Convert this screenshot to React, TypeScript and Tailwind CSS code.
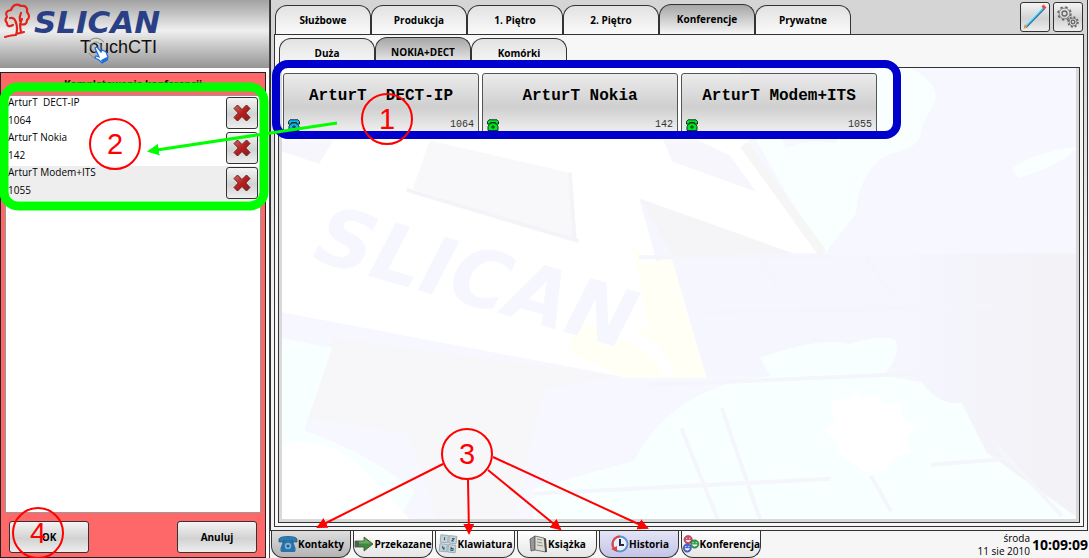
import React from "react";

type Phone = "blue" | "green";

const contacts: { name: string; number: string; phone: Phone }[] = [
  { name: "ArturT  DECT-IP", number: "1064", phone: "blue" },
  { name: "ArturT Nokia", number: "142", phone: "green" },
  { name: "ArturT Modem+ITS", number: "1055", phone: "green" },
];

const groups = ["Służbowe", "Produkcja", "1. Piętro", "2. Piętro", "Konferencje", "Prywatne"];
const subgroups = ["Duża", "NOKIA+DECT", "Komórki"];

const metal = "bg-linear-to-b from-[#f4f4f4] via-[#d2d2d2] via-55% to-[#eeeeee]";

// Icons
const DeskPhone: React.FC<{ phone: Phone }> = ({ phone }) => (
  <svg className="h-3 w-3" viewBox="0 0 12 12" fill={phone === "blue" ? "#12b4ee" : "#00e619"} stroke="#12332a" strokeWidth="1">
    <path d="M3 4h6l2 3.500v4H1v-4z" />
    <path d="M.5 2.500 2 .8h8l1.500 1.700V5H8.500V3.500h-5V5H.5z" />
    <path d="M6 6v4M4 8h4" />
  </svg>
);

const RemoveIcon = () => (
  <svg className="h-5 w-5" viewBox="0 0 20 20">
    <defs>
      <linearGradient id="cross" x1="0" y1="0" x2="1" y2="1">
        <stop offset="0" stopColor="#cf6a66" />
        <stop offset="0.5" stopColor="#b81c1c" />
        <stop offset="1" stopColor="#8f1a1a" />
      </linearGradient>
    </defs>
    <path d="M2 5.500 5.500 2 10 6.500 14.500 2 18 5.500 13.700 10 18 14.500 14.500 18 10 13.500 5.500 18 2 14.500 6.300 10z" fill="url(#cross)" stroke="#5d2222" strokeWidth="1" strokeLinejoin="round" />
  </svg>
);

const PencilIcon = () => (
  <svg className="h-7 w-7" viewBox="0 0 28 28">
    <path d="M4.500 24 23 5" stroke="#2c6f99" strokeWidth="3" />
    <path d="M4.500 23 22.500 4.500" stroke="#58c8ee" strokeWidth="2" />
    <path d="M4.500 22 21.500 4.500" stroke="#d5f5ff" strokeWidth="1" />
    <path d="m22 5 2-2" stroke="#e04b41" strokeWidth="4" />
    <path d="m2.500 26 1.300-4.500 2.700 2.500z" fill="#d99b3d" />
  </svg>
);

const GearsIcon = () => (
  <svg className="h-6 w-6" viewBox="0 0 24 24" fill="none" stroke="#666">
    <circle cx="8.500" cy="8.500" r="6.500" strokeWidth="1.500" strokeDasharray="2.500 2.600" />
    <circle cx="8.500" cy="8.500" r="5.400" strokeWidth="0.800" />
    <circle cx="8.500" cy="8.500" r="2.500" strokeWidth="1.300" />
    <circle cx="17" cy="17" r="5" strokeWidth="1.500" strokeDasharray="2 1.900" />
    <circle cx="17" cy="17" r="4" strokeWidth="0.800" />
    <circle cx="17" cy="17" r="1.800" strokeWidth="1.300" />
  </svg>
);

const BluePhoneIcon = () => (
  <svg className="h-5 w-5" viewBox="0 0 20 20">
    <path d="M5 7h10l2.500 7v3q0 1-2 1h-11q-2 0-2-1v-3z" fill="#2a72ab" />
    <path d="M1 8V5q1-2.500 9-2.500T19 5v3h-5V6.500H6V8z" fill="#2c7db6" stroke="#184f7b" strokeWidth="0.700" />
    <circle cx="10" cy="12" r="3.200" fill="#7fb4d6" />
    <circle cx="10" cy="12" r="1.500" fill="#1c5d8f" />
  </svg>
);

const ForwardIcon = () => (
  <svg className="h-5 w-5" viewBox="0 0 20 20">
    <path d="M1 7h9V3l9 7-9 7v-4H1z" fill="#3d8b3b" stroke="#3c4f3c" strokeWidth="0.800" />
    <path d="M1.500 7.500H5v5H1.500z" fill="#4f5f52" />
    <path d="M5 7.500h5.500V4.500L17 9.500H5z" fill="#6aa962" />
  </svg>
);

const KeypadIcon = () => (
  <svg className="h-5 w-5" viewBox="0 0 20 20" fill="#c3d3da" stroke="#8fa3ac" strokeWidth="0.800">
    <g transform="rotate(6 10 10)">
      <rect x="2" y="1.500" width="7.500" height="7.500" />
      <rect x="10.500" y="1.500" width="7.500" height="7.500" />
      <rect x="2" y="10.500" width="7.500" height="7.500" />
      <rect x="10.500" y="10.500" width="7.500" height="7.500" />
      <path d="M6 3.500v3M13.500 4h2l-2 2.500h2M5 12.500v2h2m-.5-1v3M13.500 12.500v3.500h2v-2h-2" stroke="#365563" strokeWidth="1" fill="none" />
    </g>
  </svg>
);

const BookIcon = () => (
  <svg className="h-5 w-5" viewBox="0 0 20 20">
    <path d="m2 5 5-3v14l-4 1z" fill="#999" stroke="#555" strokeWidth="0.800" />
    <path d="m7 2 9 2 2 14-11-2z" fill="#deded6" stroke="#5b5b56" strokeWidth="0.800" />
    <path d="m9 5 5 1M9 8l5 1M9 11l6 1" stroke="#929289" />
    <path d="m16 4 2 .5L19 18h-2z" fill="#4a4a48" />
  </svg>
);

const ClockIcon = () => (
  <svg className="h-5 w-5" viewBox="0 0 20 20" fill="none" strokeWidth="2">
    <circle cx="11" cy="10" r="7.500" fill="#e9effb" stroke="#5e94d6" />
    <path d="M11 2.500a7.500 7.500 0 0 0-5 13" stroke="#e04545" />
    <path d="m2 15 6 3V12z" fill="#e04545" />
    <path d="M11 5v6h4" stroke="#252b3c" />
  </svg>
);

const Face: React.FC<{ x: number; y: number; fill: string }> = ({ x, y, fill }) => (
  <g transform={`translate(${x} ${y})`}>
    <circle r="4.800" fill={fill} stroke="#3a3a55" strokeWidth="0.500" />
    <path d="M-2.500-1.500h1.500M1-1.500h1.500M-2.500 1q2.500 3 5 0z" stroke="#fff" fill="#fff" strokeWidth="0.900" />
  </g>
);

const FacesIcon = () => (
  <svg className="h-5 w-5" viewBox="0 0 20 20">
    <Face x={7} y={5} fill="#d84464" />
    <Face x={14.5} y={10} fill="#2ca443" />
    <Face x={6} y={14.5} fill="#4a67df" />
  </svg>
);

const views = [
  { label: "Kontakty", icon: <BluePhoneIcon />, look: "bg-linear-to-b from-[#dedede] to-[#b4b4b4]" },
  { label: "Przekazane", icon: <ForwardIcon />, look: "bg-linear-to-b from-white to-[#e6e6e6]" },
  { label: "Klawiatura", icon: <KeypadIcon />, look: "bg-linear-to-b from-white to-[#e6e6e6]" },
  { label: "Książka", icon: <BookIcon />, look: "bg-linear-to-b from-white to-[#e6e6e6]" },
  { label: "Historia", icon: <ClockIcon />, look: "bg-linear-to-b from-[#e4e4f4] to-[#c4c4e8]" },
  { label: "Konferencja", icon: <FacesIcon />, look: "bg-linear-to-b from-white to-[#e6e6e6]" },
];

const Logo = () => (
  <svg className="h-[68px] w-[269px]" viewBox="0 0 269 68" role="img" aria-label="Slican TouchCTI">
    <path
      d="M5 37q7-2 11-2 2-6 0-13M16 34l8-2M21 32q-2-8 1-13M13 25q-6 3-6-2-3-3 0-6-3-6 4-7 3-8 10-4 7-1 6 6 4 5 0 8 0 6-7 4M10 18q5-1 6 5M21 13q-2 4-1 8"
      fill="none" stroke="#e2231a" strokeWidth="2.200" strokeLinecap="round" strokeLinejoin="round"
    />
    <text x="34" y="33" fill="#2b3f87" fontFamily="DejaVu Sans, sans-serif" fontWeight="700" fontStyle="italic" fontSize="31">SLICAN</text>
    <text x="80" y="53" fill="#111" fontFamily="Liberation Sans, sans-serif" fontSize="18">TouchCTI</text>
    <g fill="none" stroke="#888" strokeWidth="1">
      <circle cx="96" cy="47" r="5" />
      <path d="M88 42q8-8 16 0M89 53q3 5 9 5" />
    </g>
    <path d="m95 48 2-1 4 5 1-2 4 2 2 5-1 3-5 3-3-3-4-2 1-2 3 1z" fill="#fff" stroke="#1a6fe0" strokeWidth="1.300" />
    <path d="m101 60 6-3 1 3-6 3z" fill="#1a6fe0" />
  </svg>
);

// Washed-out photo of the company building
const Backdrop = () => (
  <svg className="absolute inset-0 h-full w-full" viewBox="282 70 795 448" preserveAspectRatio="xMidYMid slice" aria-hidden="true">
    <defs>
      <linearGradient id="wall" x1="0" y1="0" x2="1" y2="0">
        <stop offset="0.600" stopColor="#f6f6ff" />
        <stop offset="0.900" stopColor="#f3f2f7" />
      </linearGradient>
    </defs>
    <path d="M282 70h795v448H282z" fill="#fff" />
    <path d="M740 70h337v184H824L750 150z" fill="#f7f7ff" />
    <path d="M755 140q25-14 30 10 20-10 50-5l20-50q20-40 55-25 35 20 20 40l-10 20q0 20-30 25-30 12-35 60l-30 39h-5zM1010 170q20-16 67-22-20 20-60 31z" fill="#f8fffe" />
    <path d="M640 200 790 254h287v264H760l-70-140z" fill="url(#wall)" />
    <path d="M282 312 620 376h140v142H282z" fill="#f7f7ff" />
    <path d="M335 338 620 376 545 390 515 518H440l-30-85-100-15z" fill="#f7f7fa" />
    <path d="M282 338 335 348 307 430q60 20 110 60l-15 28H282z" fill="#f8ffff" />
    <path d="M282 445q50-15 90 30l40 43H282z" fill="#fff" />
    <path d="M432 142 571 174 576 242 415 190z" fill="#f8f8fb" />
    <path d="M409 191 580 242M571 174l5 68" stroke="#f4f4f8" strokeWidth="4" fill="none" />
    <path d="M282 142h54l-14 23-40-13zM664 142h35l31 15 26 36-83-30z" fill="#f6f6fc" />
    <path d="M744 146 822 254" stroke="#f6f6f6" strokeWidth="9" />
    <path d="M641 200 793 254 674 257z" fill="#f5f5f7" />
    <path d="M632 242 648 265 672 258 707 378H625L570 352 575 325 650 330z" fill="#fffff6" />
    <path d="M605 330q50 5 65 46" stroke="#fff" strokeWidth="12" fill="none" />
    <path d="M740 380q95-15 180 2 20 25 40 20l25 50 92 66H535V488l100-28q30-60 105-80z" fill="#f8ffff" />
    <path d="M760 358q60-22 90-14 30-10 45-4 5 20-15 36H770z" fill="#f8ffff" />
    <path d="M682 428 718 518M722 408 760 518M535 493 830 478M640 258h190M700 313l290-6M650 385l280-12M930 464l80-6M760 259l20 34M865 259l32 43M990 440l70 75M870 475l20 35" stroke="#f5f5fc" strokeWidth="4" fill="none" />
    <path d="m834 400 12-2 8-6 8 7 16-6 6 10 16 0 0 14 16 8-10 12 4 16-16 4-8 12-22 2-10-8-14-8-6-14-10-12 12-8-6-14z" fill="#fff" />
    <text transform="translate(314 260) rotate(16)" fontFamily="DejaVu Sans, sans-serif" fontWeight="700" fontStyle="italic" fontSize="80" fill="#f6f6fe">SLICAN</text>
  </svg>
);

// Numbered steps drawn over the screen
const steps = [
  { n: 1, x: 387, y: 119 },
  { n: 2, x: 115, y: 144 },
  { n: 3, x: 467, y: 454 },
  { n: 4, x: 38, y: 533 },
];

const Annotations = () => (
  <svg className="pointer-events-none absolute top-0 left-0 h-[558px] w-[1089px]" viewBox="0 0 1089 558" fill="none">
    <defs>
      <marker id="redHead" markerUnits="userSpaceOnUse" markerWidth="12" markerHeight="12" refX="9" refY="5.500" orient="auto">
        <path d="M0 0 11 5.500 0 11z" fill="#f00" />
      </marker>
      <marker id="greenHead" markerUnits="userSpaceOnUse" markerWidth="12" markerHeight="13" refX="9" refY="6" orient="auto">
        <path d="M0 0 12 6 0 12z" fill="#0f0" />
      </marker>
    </defs>
    <rect x="276" y="64" width="621" height="71" rx="12" stroke="#0000cd" strokeWidth="8" />
    <rect x="4" y="87" width="260" height="119" rx="14" stroke="#0f0" strokeWidth="9" />
    <path d="M337 123 150 151" stroke="#0f0" strokeWidth="3" markerEnd="url(#greenHead)" />
    <g stroke="#f00" strokeWidth="2">
      <path d="M443 464 318 527" markerEnd="url(#redHead)" />
      <path d="M468 480 469 533" markerEnd="url(#redHead)" />
      <path d="M488 470 560 529" markerEnd="url(#redHead)" />
      <path d="M493 457 647 528" markerEnd="url(#redHead)" />
      {steps.map((s) => (
        <circle key={s.n} cx={s.x} cy={s.y} r="25" />
      ))}
    </g>
    <g fill="#f00" fontFamily="Liberation Sans, sans-serif" fontSize="29" textAnchor="middle">
      {steps.map((s) => (
        <text key={s.n} x={s.x} y={s.y + 10}>{s.n}</text>
      ))}
    </g>
  </svg>
);

const Tab: React.FC<{ label: string; active: boolean }> = ({ label, active }) => (
  <button
    className={`w-24 rounded-t-xl border border-b-0 border-[#333] text-[10px] font-bold ${
      active
        ? "h-[30px] bg-linear-to-b from-[#a6a6a6] to-[#f7f7f7]"
        : "h-[29px] bg-linear-to-b from-[#e2e2e2] to-[#fafafa]"
    }`}
  >
    {label}
  </button>
);

const ConferencePanel = () => (
  <aside className="flex w-[270px] shrink-0 flex-col border-r border-[#444] bg-white">
    <header className="h-[68px] bg-linear-to-b from-[#a2a2a2] via-[#efefef] via-45% to-[#959595]">
      <Logo />
    </header>
    <section className="mt-1 mr-[3px] flex flex-1 flex-col border border-[#222] bg-[#ff6868] px-1">
      <h2 className="h-[22px] text-center text-[10px] leading-[22px] font-bold">Kompletowanie konferencji</h2>
      <ul className="flex-1 border border-[#999] bg-white">
        {contacts.map((c) => (
          <li key={c.number} className="flex h-[35px] items-start justify-between pr-[2px] pl-0.5 text-[10px] last:bg-[#eee]">
            <div>
              <p className="leading-[13px] whitespace-pre">{c.name}</p>
              <p className="leading-[22px]">{c.number}</p>
            </div>
            <button aria-label={`Usuń ${c.number}`} className={`mt-px flex size-8 items-center justify-center rounded-[3px] border border-[#333] ${metal}`}>
              <RemoveIcon />
            </button>
          </li>
        ))}
      </ul>
      <div className="flex justify-between px-1 pt-2 pb-1">
        <button className={`h-8 w-20 rounded-[3px] border border-[#333] text-[10px] font-bold ${metal}`}>OK</button>
        <button className={`h-8 w-20 rounded-[3px] border border-[#333] text-[10px] font-bold ${metal}`}>Anuluj</button>
      </div>
    </section>
  </aside>
);

const App: React.FC = () => {
  return (
    <div className="relative flex h-screen min-h-[480px] w-full overflow-hidden bg-[#f6f6f6] font-['Open_Sans',sans-serif] text-black">
      <ConferencePanel />

      <main className="flex min-w-0 flex-1 flex-col">
        <div className="mr-px flex flex-1 flex-col border-x border-b border-[#333] bg-linear-to-b from-[#d5d5d5] from-10% to-[#f4f4f4] to-60% px-[3px] pb-[3px]">
          <div className="flex h-[34px] items-end pl-px">
            {groups.map((g) => (
              <Tab key={g} label={g} active={g === "Konferencje"} />
            ))}
            <div className="ml-auto flex gap-[3px] pr-px pb-[2px]">
              <button aria-label="Edycja" className={`flex size-[30px] items-center justify-center rounded-[3px] border border-[#333] ${metal}`}>
                <PencilIcon />
              </button>
              <button aria-label="Ustawienia" className={`flex size-[30px] items-center justify-center rounded-[3px] border border-[#333] ${metal}`}>
                <GearsIcon />
              </button>
            </div>
          </div>

          <div className="flex flex-1 flex-col border border-[#333] bg-[#f7f7f7] px-[3px] pb-[3px]">
            <div className="flex h-8 items-end pl-px">
              {subgroups.map((g) => (
                <Tab key={g} label={g} active={g === "NOKIA+DECT"} />
              ))}
            </div>
            <div className="flex flex-1 flex-col border border-[#333] bg-[#d9d9d9] p-[3px] pt-0">
              <div className="relative flex-1 overflow-hidden bg-white">
                <Backdrop />
                <div className="relative flex gap-[3px] px-px pt-[5px]">
                  {contacts.map((c) => (
                    <button
                      key={c.number}
                      className="flex h-[62px] w-[196px] flex-col rounded-[3px] border border-[#555] bg-linear-to-b from-[#ececec] via-[#cfcfcf] via-55% to-[#f2f2f2] px-1 font-['Liberation_Mono',monospace]"
                    >
                      <span className="flex h-11 w-full items-center justify-center text-base font-bold whitespace-pre">{c.name}</span>
                      <span className="flex w-full items-center justify-between text-[10px] leading-[14px] text-[#333]">
                        <DeskPhone phone={c.phone} />
                        {c.number}
                      </span>
                    </button>
                  ))}
                </div>
              </div>
            </div>
          </div>
        </div>

        <footer className="flex h-[27px] justify-between pl-px">
          <nav className="flex gap-0.5">
            {views.map((v) => (
              <button
                key={v.label}
                className={`flex w-20 items-center justify-center rounded-b-xl border border-t-0 border-[#333] text-[10px] font-bold ${v.look}`}
              >
                {v.icon}
                {v.label}
              </button>
            ))}
          </nav>
          <div className="flex items-center gap-0.5 pr-px">
            <p className="text-right text-[10px] leading-[13px]">
              środa
              <br />
              11 sie 2010
            </p>
            <time className="text-sm font-bold">10:09:09</time>
          </div>
        </footer>
      </main>

      <Annotations />
    </div>
  );
};

export default App;
